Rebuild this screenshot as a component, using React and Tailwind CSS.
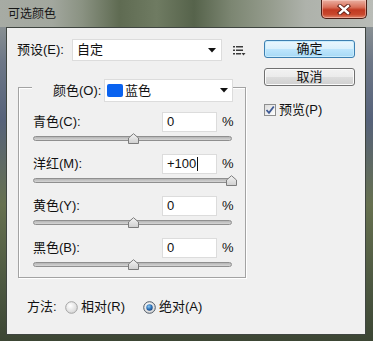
import React from "react";

const rows = [
  { label: "青色(C):", value: "0", pos: 0 },
  { label: "洋红(M):", value: "+100", pos: 100, focus: true },
  { label: "黄色(Y):", value: "0", pos: 0 },
  { label: "黑色(B):", value: "0", pos: 0 },
];

function Arrow() {
  return (
    <svg width="8" height="5" viewBox="0 0 8 5">
      <path d="M0 0 L8 0 L4 4.5 Z" fill="#111" />
    </svg>
  );
}

function Slider({ pos }) {
  // track is 199px wide, 0 sits in the middle
  const left = 100 + pos * 0.98 - 5.5;
  return (
    <div className="relative h-[22px] pt-[4px] w-[199px]">
      <div className="h-[5px] rounded-full border border-[#8f8f8f] bg-[linear-gradient(to_bottom,#b4b4b4,#d6d6d6)]" />
      <svg className="absolute top-[1px]" style={{ left }} width="11" height="11" viewBox="0 0 11 11">
        <defs>
          <linearGradient id="th" x1="0" y1="0" x2="0" y2="1">
            <stop offset="0" stopColor="#f4f4f4" />
            <stop offset="1" stopColor="#cfcfcf" />
          </linearGradient>
        </defs>
        <path d="M0.5 10.5 L0.5 5 L5.5 0.7 L10.5 5 L10.5 10.5 Z" fill="url(#th)" stroke="#7c7c7c" strokeWidth="1" />
      </svg>
    </div>
  );
}

function Radio({ checked }) {
  return (
    <svg width="13" height="13" viewBox="0 0 13 13">
      <defs>
        <radialGradient id={checked ? "rc" : "ru"} cx="0.4" cy="0.35" r="0.7">
          <stop offset="0" stopColor="#ffffff" />
          <stop offset="1" stopColor="#d4d4d4" />
        </radialGradient>
        <radialGradient id="dot" cx="0.4" cy="0.35" r="0.7">
          <stop offset="0" stopColor="#8cc8f0" />
          <stop offset="0.6" stopColor="#2a70b8" />
          <stop offset="1" stopColor="#163f78" />
        </radialGradient>
      </defs>
      <circle cx="6.5" cy="6.5" r="5.8" fill={checked ? "url(#rc)" : "url(#ru)"} stroke={checked ? "#4f5a66" : "#a4a4a4"} />
      {checked && <circle cx="6.5" cy="6.5" r="3.2" fill="url(#dot)" />}
    </svg>
  );
}

export default function App() {
  return (
    <div className="w-[373px] h-[341px] flex flex-col overflow-hidden bg-[linear-gradient(to_bottom,#9ea39c_0%,#6d7787_18%,#56627a_35%,#66704f_60%,#4b5640_85%,#3c4634_100%)] font-['Liberation_Sans','Noto_Sans_CJK_SC',sans-serif] text-[13px] text-[#111]">
      {/* title bar */}
      <div className="relative h-[27px] shrink-0 bg-[linear-gradient(to_right,#a7aba4_0%,#a2a79e_14%,#8a9282_22%,#5f6b52_32%,#6f7b62_42%,#56634b_52%,#7c8672_62%,#949b8c_72%,#aeb2ab_82%,#b9bcb7_100%)]">
        <span className="absolute left-[8px] top-[6px] text-[12px] leading-[16px] text-[#161616]">可选颜色</span>
        <div className="absolute right-[6px] top-0 w-[46px] h-[19px] rounded-b-[5px] border border-t-0 border-[#4a1e16] bg-[linear-gradient(to_bottom,#eab0a2_0%,#d9705a_40%,#c13a22_55%,#c8472c_80%,#e0866a_100%)] flex items-center justify-center shadow-[inset_0_0_0_1px_rgba(255,220,210,0.45)]">
          <svg width="14" height="11" viewBox="0 0 14 11">
            <path d="M3 2 L11 9 M11 2 L3 9" stroke="#5a1a10" strokeWidth="4.2" strokeLinecap="square" />
            <path d="M3 2 L11 9 M11 2 L3 9" stroke="#ffffff" strokeWidth="2.4" strokeLinecap="square" />
          </svg>
        </div>
      </div>

      {/* client area */}
      <div className="ml-[6px] w-[360px] h-[308px] border border-[#3f4540] bg-[#f0f0f0] flex">
        {/* left column */}
        <div className="w-[257px] pl-[10px] pt-[11px] flex flex-col">
          <div className="flex items-center h-[22px]">
            <span className="w-[55px] leading-[16px]">预设(E):</span>
            <div className="w-[150px] h-[22px] bg-white border border-[#dcdcdc] flex items-center pl-[4px] pr-[5px]">
              <span className="flex-1 leading-[16px]">自定</span>
              <Arrow />
            </div>
            <svg className="ml-[11px] mt-[2px]" width="13" height="12" viewBox="0 0 13 12">
              <g fill="#3a3a3a">
                <rect x="0" y="1" width="2" height="1.5" />
                <rect x="3" y="1" width="7" height="1.5" />
                <rect x="0" y="4.5" width="2" height="1.5" />
                <rect x="3" y="4.5" width="7" height="1.5" />
                <rect x="0" y="8" width="2" height="1.5" />
                <rect x="3" y="8" width="5" height="1.5" />
                <path d="M8.5 8 L12.5 8 L10.5 10.5 Z" />
              </g>
            </svg>
          </div>

          {/* group box */}
          <div className="ml-[1px] mt-[26px] w-[228px] h-[191px] border border-[#a3a3a3] shadow-[inset_1px_1px_0_#ffffff,1px_1px_0_#ffffff]">
            <div className="-mt-[9px] ml-[13px] flex items-center h-[23px]">
              <div className="bg-[#f0f0f0] pl-[21px] w-[72px] h-[23px] flex items-center">
                <span className="leading-[16px]">颜色(O):</span>
              </div>
              <div className="w-[129px] h-[23px] bg-white border border-[#dcdcdc] flex items-center pl-[2px] pr-[4px]">
                <span className="w-[16px] h-[13px] rounded-[2px] bg-[#0a63f0]" />
                <span className="ml-[2px] flex-1 leading-[16px]">蓝色</span>
                <Arrow />
              </div>
            </div>

            <div className="pl-[14px] pt-[10px] flex flex-col">
              {rows.map((r) => (
                <div key={r.label} className="flex flex-col">
                  <div className="flex items-center h-[20px]">
                    <span className="w-[129px] leading-[16px]">{r.label}</span>
                    <div className="w-[55px] h-[20px] bg-white border border-[#dcdcdc] flex items-center pl-[4px]">
                      <span className="leading-[16px]">{r.value}</span>
                      {r.focus && <span className="w-px h-[14px] bg-[#111] ml-[1px]" />}
                    </div>
                    <span className="ml-[5px] leading-[16px]">%</span>
                  </div>
                  <Slider pos={r.pos} />
                </div>
              ))}
            </div>
          </div>

          {/* method */}
          <div className="mt-[19px] ml-[10px] h-[20px] flex items-center">
            <span className="w-[38px] leading-[16px]">方法:</span>
            <Radio checked={false} />
            <span className="ml-[3px] w-[62px] leading-[16px]">相对(R)</span>
            <Radio checked />
            <span className="ml-[3px] leading-[16px]">绝对(A)</span>
          </div>
        </div>

        {/* right column */}
        <div className="w-[91px] pt-[12px] flex flex-col">
          <button className="h-[18px] w-[91px] rounded-[3px] border border-[#3c7fb1] bg-[linear-gradient(to_bottom,#eaf6fd_0%,#d9f0fc_50%,#bee6fd_50%,#a7d9f5_100%)] shadow-[inset_0_0_0_1px_#c8ecfd] flex items-center justify-center leading-[16px]">
            确定
          </button>
          <button className="mt-[10px] h-[18px] w-[91px] rounded-[3px] border border-[#707070] bg-[linear-gradient(to_bottom,#f2f2f2_0%,#ebebeb_50%,#dddddd_50%,#cfcfcf_100%)] shadow-[inset_0_0_0_1px_#fbfbfb] flex items-center justify-center leading-[16px]">
            取消
          </button>
          <div className="mt-[17px] flex items-center h-[13px]">
            <div className="w-[12px] h-[12px] border border-[#8e8f8f] bg-[linear-gradient(135deg,#dcdcdc,#ffffff)] flex items-center justify-center">
              <svg width="10" height="10" viewBox="0 0 10 10">
                <path d="M1.5 5 L4 7.8 L8.8 1.5" fill="none" stroke="#3f5a94" strokeWidth="1.8" />
              </svg>
            </div>
            <span className="ml-[3px] leading-[16px]">预览(P)</span>
          </div>
        </div>
      </div>
    </div>
  );
}
